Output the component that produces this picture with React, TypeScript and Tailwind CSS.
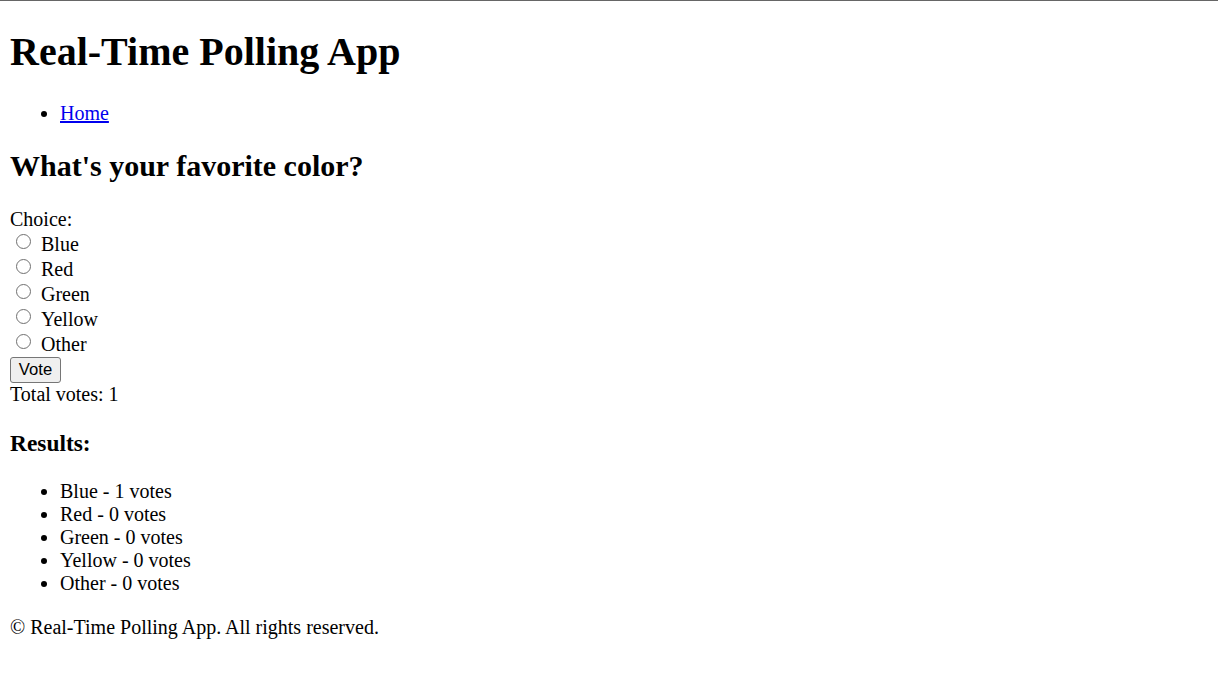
import React from "react";

const options = ["Blue", "Red", "Green", "Yellow", "Other"];
const votes: Record<string, number> = { Blue: 1, Red: 0, Green: 0, Yellow: 0, Other: 0 };

export default function App() {
  return (
    <div className="min-h-[697px] bg-white border-t border-[#666] text-black text-[20px] leading-[normal]" style={{ fontFamily: '"Liberation Serif", "Times New Roman", serif' }}>
      <div className="mx-[10px] pt-[1px]">
        <header>
          <h1 className="text-[40px] font-bold leading-[normal] mt-[25.8px] mb-[26.8px]">Real-Time Polling App</h1>
          <nav>
            <ul className="list-disc pl-[50px] my-[20px]">
              <li>
                <a href="#" className="text-[#0000ee] underline">Home</a>
              </li>
            </ul>
          </nav>
        </header>
        <main>
          <h2 className="text-[30px] font-bold leading-[normal] my-[24.9px]">What's your favorite color?</h2>
          <form onSubmit={(e) => e.preventDefault()}>
            <div>Choice:</div>
            {options.map((o) => (
              <div key={o} className="h-[25px] flex items-end">
                <label className="flex items-end">
                  <span className="block w-[15px] h-[15px] rounded-full border-[1.5px] border-[#707070] bg-white ml-[6px] mr-[10px] mb-[7px]" />
                  <span>{o}</span>
                </label>
              </div>
            ))}
            <button type="submit" className="mt-[1px] h-[26px] w-[51px] bg-[#efefef] border border-[#767676] rounded-[3px] text-[16.67px] leading-none" style={{ fontFamily: '"Liberation Sans", Arial, sans-serif' }}>
              Vote
            </button>
          </form>
          <div>Total votes: 1</div>
          <h3 className="text-[23.4px] font-bold leading-[normal] my-[23.4px]">Results:</h3>
          <ul className="list-disc pl-[50px] my-[20px]">
            {options.map((o) => (
              <li key={o}>
                {o} - {votes[o]} votes
              </li>
            ))}
          </ul>
        </main>
        <footer>
          <p className="mt-[21px] mb-[20px]">© Real-Time Polling App. All rights reserved.</p>
        </footer>
      </div>
    </div>
  );
}
